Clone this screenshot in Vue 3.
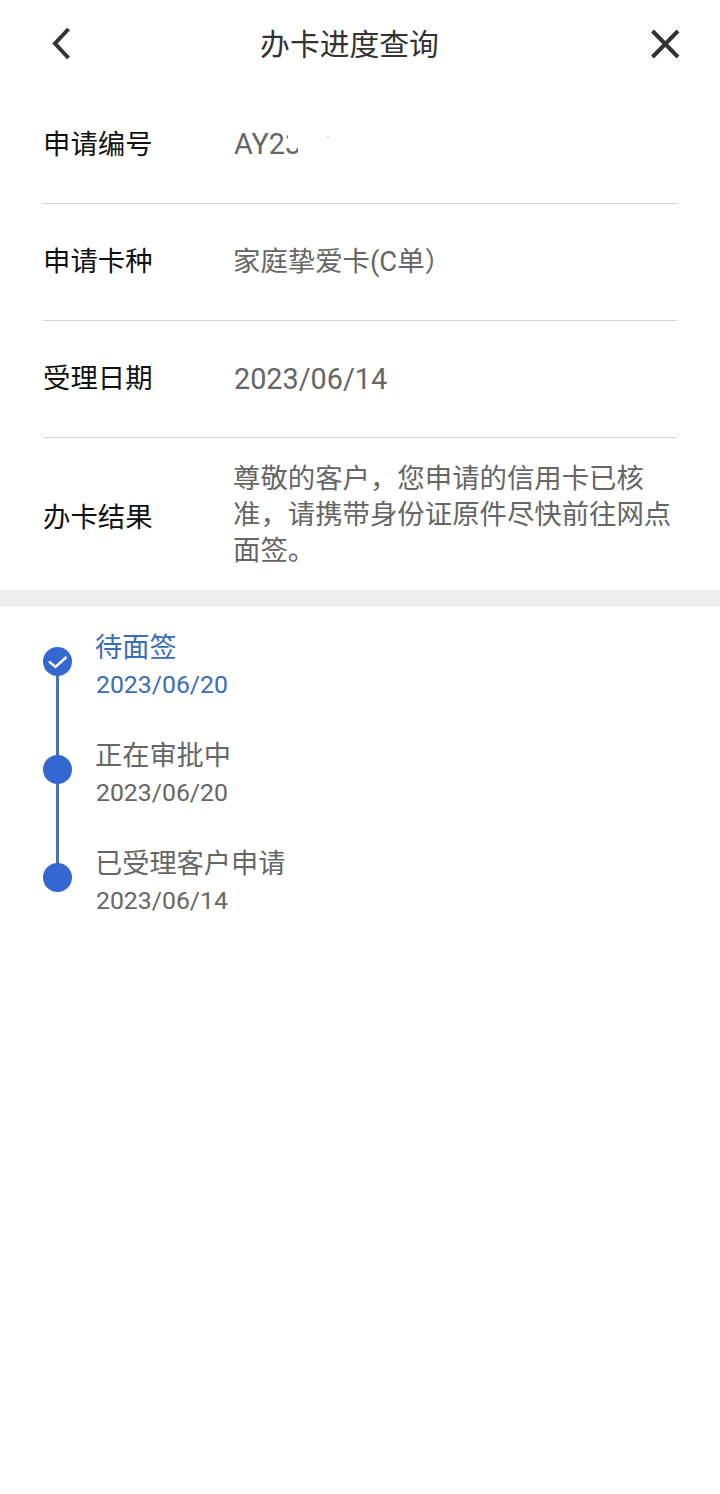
<script setup>
const rows = [
  { label: '申请编号', value: 'AY23', masked: true },
  { label: '申请卡种', value: '家庭挚爱卡(C单）', cjk: true },
  { label: '受理日期', value: '2023/06/14', date: true }
]

const steps = [
  { title: '待面签', date: '2023/06/20', done: true },
  { title: '正在审批中', date: '2023/06/20' },
  { title: '已受理客户申请', date: '2023/06/14' }
]
</script>

<template>
  <div class="page">
    <header class="nav">
      <svg class="nav-icon" width="24" height="36" viewBox="0 0 24 36">
        <path d="M18.5 3 L5 17.5 L18.5 32" fill="none" stroke="#333" stroke-width="4" />
      </svg>
      <h1 class="nav-title">办卡进度查询</h1>
      <svg class="nav-icon" width="32" height="32" viewBox="0 0 32 32">
        <path d="M4.5 3 L30 29 M30 3 L4.5 29" fill="none" stroke="#333" stroke-width="4" />
      </svg>
    </header>

    <section class="info">
      <div v-for="row in rows" :key="row.label" class="row">
        <div class="label">{{ row.label }}</div>
        <div class="value" :class="{ date: row.date, masked: row.masked, cjk: row.cjk }">
          {{ row.value }}
          <span v-if="row.masked" class="mask mask-mid"></span>
          <span v-if="row.masked" class="mask mask-end"></span>
          <span v-if="row.masked" class="speck"></span>
        </div>
      </div>
      <div class="row row-last">
        <div class="label">办卡结果</div>
        <div class="value result">尊敬的客户，您申请的信用卡已核准，请携带身份证原件尽快前往网点面签。</div>
      </div>
    </section>

    <div class="band"></div>

    <section class="timeline">
      <div v-for="(step, i) in steps" :key="step.title" class="step" :class="{ done: step.done }">
        <div class="rail">
          <span v-if="i < steps.length - 1" class="line"></span>
          <span class="dot">
            <svg v-if="step.done" width="29" height="29" viewBox="0 0 29 29">
              <path d="M6 14.5 L12.5 20 L23.5 10" fill="none" stroke="#fff" stroke-width="2.4" />
            </svg>
          </span>
        </div>
        <div class="step-text">
          <div class="step-title">{{ step.title }}</div>
          <div class="step-date">{{ step.date }}</div>
        </div>
      </div>
    </section>
  </div>
</template>

<style>
html, body {
  margin: 0;
  background: #fff;
}
</style>

<style scoped>
.page {
  width: 720px;
  height: 1494px;
  background: #fff;
  font-family: Roboto, "Noto Sans CJK SC", sans-serif;
  overflow: hidden;
}

.nav {
  height: 87px;
  padding: 0 40px 0 50px;
  display: flex;
  align-items: center;
  justify-content: space-between;
  box-sizing: border-box;
}

.nav-icon {
  display: block;
}

.nav-title {
  margin: 2px 23px 0 0;
  font-size: 29.8px;
  font-weight: 400;
  line-height: 40px;
  color: #333;
}

.info {
  padding: 0 43px;
}

.row {
  height: 117px;
  box-sizing: border-box;
  border-bottom: 1px solid #d2d2d2;
  display: flex;
  align-items: center;
}

.row-last {
  height: 152px;
  border-bottom: none;
}

.label {
  width: 191px;
  flex-shrink: 0;
  font-size: 27.4px;
  color: #111;
  margin-bottom: 6px;
}

.row-last .label {
  margin-top: 1px;
  margin-bottom: 0;
}

.value {
  font-size: 27.4px;
  color: #666;
  position: relative;
}

.value.date {
  font-size: 28.8px;
}

.value.masked {
  font-size: 28.8px;
  margin-bottom: 2px;
}

.value.cjk {
  margin: 0 0 6px -1px;
}

.mask {
  position: absolute;
  background: #fff;
}

.mask-mid {
  left: 54px;
  top: 0;
  width: 50px;
  height: 21px;
}

.mask-end {
  left: 64px;
  top: 0;
  width: 40px;
  height: 40px;
}

.speck {
  position: absolute;
  left: 93px;
  top: 9px;
  width: 2px;
  height: 2px;
  background: #ddd;
}

.result {
  flex: 1;
  margin-left: -1px;
  padding-top: 2px;
  line-height: 36px;
}

.band {
  height: 17px;
  background: #eeeeee;
}

.timeline {
  padding: 20px 43px 0;
}

.step {
  height: 108px;
  display: flex;
}

.rail {
  width: 29px;
  margin-right: 24px;
  position: relative;
  display: flex;
  justify-content: center;
  padding-top: 20px;
  box-sizing: border-box;
}

.dot {
  width: 29px;
  height: 29px;
  border-radius: 50%;
  background: #3468d0;
  position: relative;
  display: block;
}

.dot svg {
  display: block;
}

.line {
  position: absolute;
  left: 13px;
  top: 34px;
  width: 3px;
  height: 108px;
  background: #4a74a8;
}

.step-text {
  padding-top: 1px;
}

.step-title {
  margin-left: -1px;
  font-size: 27.2px;
  line-height: 40px;
  color: #666;
}

.step-date {
  font-size: 24.8px;
  line-height: 34px;
  color: #666;
}

.done .step-title,
.done .step-date {
  color: #3b6cb8;
}
</style>
